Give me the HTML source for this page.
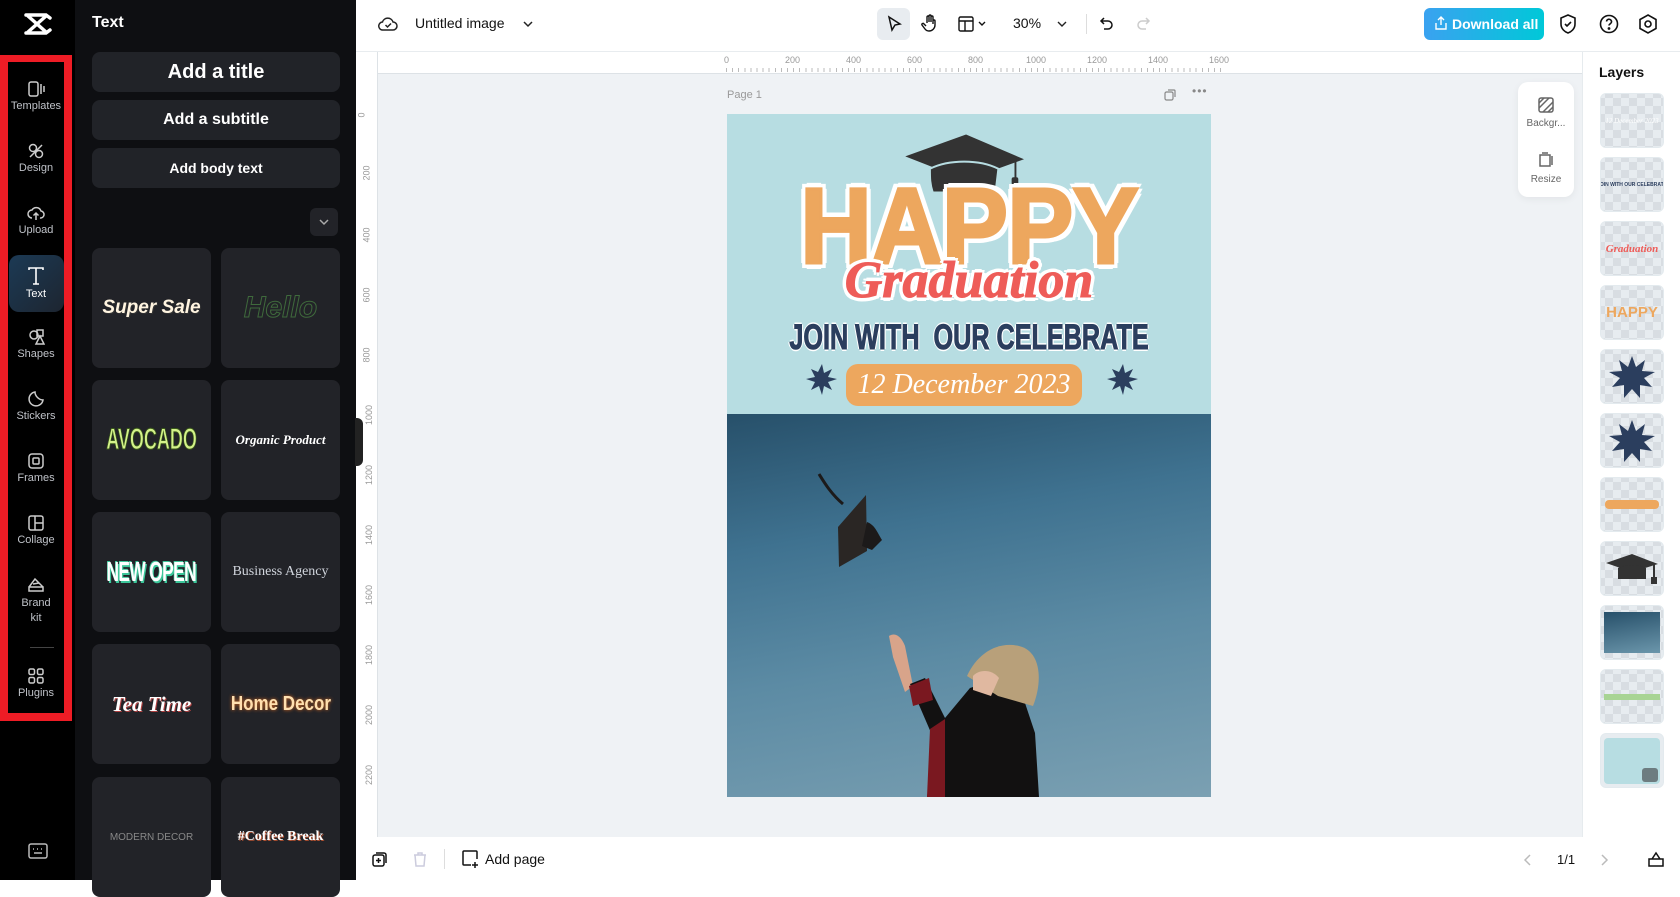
<!DOCTYPE html>
<html><head><meta charset="utf-8">
<style>
*{box-sizing:border-box;margin:0;padding:0}
body{width:1680px;height:880px;overflow:hidden;font-family:"Liberation Sans",sans-serif;background:#fff;position:relative}
.abs{position:absolute}
.rail{left:0;top:0;width:75px;height:880px;background:#000}
.ri{position:absolute;left:8px;width:56px;text-align:center;color:#bfc2c8;font-size:11px}
.ri svg{display:block;margin:0 auto 2px}
.panel{left:75px;top:0;width:281px;height:880px;background:#0e0f12}
.btn{position:absolute;left:17px;width:248px;background:#212328;border-radius:8px;color:#fff;font-weight:bold;text-align:center}
.card{position:absolute;width:119px;height:120px;background:#222328;border-radius:8px;display:flex;align-items:center;justify-content:center;overflow:hidden;white-space:nowrap}
.thumb{position:absolute;left:1600px;width:64px;height:55px;border-radius:6px;background-color:#e7ecf0;border:1px solid #e3eaee;overflow:hidden;white-space:nowrap;
background-image:linear-gradient(45deg,#d8dde2 25%,transparent 25%,transparent 75%,#d8dde2 75%),linear-gradient(45deg,#d8dde2 25%,transparent 25%,transparent 75%,#d8dde2 75%);
background-size:16px 16px;background-position:4px 4px,12px 12px;display:flex;align-items:center;justify-content:center}
</style></head><body>

<!-- left rail -->
<div class="abs rail">
  <svg class="abs" style="left:24px;top:12px" width="28" height="24" viewBox="0 0 28 24"><path d="M2 3h20l4 3M2 21h20l4-3M4 4l18 16M22 4L4 20" stroke="#fff" stroke-width="3.5" fill="none" stroke-linecap="round"/></svg>
  <div class="abs" style="left:0;top:55px;width:72px;height:666px;border:8px solid #ee1c25;border-top-width:7px"></div>
  <div class="abs" style="left:9px;top:255px;width:55px;height:57px;border-radius:10px;background:linear-gradient(135deg,#1c3a55,#1d2530)"></div>
  <div class="ri" style="top:80px"><svg width="18" height="18" viewBox="0 0 18 18" fill="none" stroke="#ccc" stroke-width="1.5"><rect x="2" y="2" width="9" height="14" rx="2"/><path d="M14 4v10M17 6v6"/></svg>Templates</div>
  <div class="ri" style="top:142px"><svg width="18" height="18" viewBox="0 0 18 18" fill="none" stroke="#ccc" stroke-width="1.5"><circle cx="6" cy="6" r="3.5"/><circle cx="12" cy="12" r="3.5"/><path d="M3 15L15 3"/></svg>Design</div>
  <div class="ri" style="top:204px"><svg width="18" height="18" viewBox="0 0 18 18" fill="none" stroke="#ccc" stroke-width="1.5"><path d="M5 14a4 4 0 010-8 5 5 0 019 1 3.5 3.5 0 01-1 7M9 9v7M6.5 11.5L9 9l2.5 2.5"/></svg>Upload</div>
  <div class="ri" style="top:266px;color:#fff"><svg width="20" height="20" viewBox="0 0 20 20" fill="none" stroke="#fff" stroke-width="1.6"><path d="M3 4V2h14v2M10 2v16M7 18h6"/></svg>Text</div>
  <div class="ri" style="top:328px"><svg width="18" height="18" viewBox="0 0 18 18" fill="none" stroke="#ccc" stroke-width="1.5"><circle cx="7" cy="7" r="4"/><path d="M9 16l4-8 4 8z" /><rect x="10" y="2" width="6" height="6"/></svg>Shapes</div>
  <div class="ri" style="top:390px"><svg width="18" height="18" viewBox="0 0 18 18" fill="none" stroke="#ccc" stroke-width="1.5"><path d="M16 10A7 7 0 118 2c0 4 4 8 8 8z"/></svg>Stickers</div>
  <div class="ri" style="top:452px"><svg width="18" height="18" viewBox="0 0 18 18" fill="none" stroke="#ccc" stroke-width="1.5"><rect x="2" y="2" width="14" height="14" rx="3"/><rect x="6" y="6" width="6" height="6" rx="1"/></svg>Frames</div>
  <div class="ri" style="top:514px"><svg width="18" height="18" viewBox="0 0 18 18" fill="none" stroke="#ccc" stroke-width="1.5"><rect x="2" y="2" width="14" height="14" rx="2"/><path d="M8 2v14M8 9h8"/></svg>Collage</div>
  <div class="ri" style="top:576px;line-height:15px"><svg width="18" height="18" viewBox="0 0 18 18" fill="none" stroke="#ccc" stroke-width="1.5"><path d="M2 15h14v-4H2zM2 11l6-8 8 8M6 8l6-1"/></svg>Brand<br>kit</div>
  <div class="abs" style="left:30px;top:647px;width:24px;height:1px;background:#444"></div>
  <div class="ri" style="top:667px"><svg width="18" height="18" viewBox="0 0 18 18" fill="none" stroke="#ccc" stroke-width="1.5"><rect x="2" y="2" width="5.5" height="5.5" rx="1.5"/><rect x="10.5" y="2" width="5.5" height="5.5" rx="1.5"/><rect x="2" y="10.5" width="5.5" height="5.5" rx="1.5"/><rect x="10.5" y="10.5" width="5.5" height="5.5" rx="1.5"/></svg>Plugins</div>
  <svg class="abs" style="left:28px;top:843px" width="20" height="16" viewBox="0 0 20 16" fill="none" stroke="#bbb" stroke-width="1.5"><rect x="1" y="1" width="18" height="14" rx="2"/><path d="M5 6h1M9 6h1M13 6h1M6 10h8"/></svg>
</div>

<!-- text panel -->
<div class="abs panel">
  <div class="abs" style="left:17px;top:14px;color:#fff;font-weight:bold;font-size:16px">Text</div>
  <div class="btn" style="top:52px;height:40px;line-height:40px;font-size:20px">Add a title</div>
  <div class="btn" style="top:100px;height:40px;line-height:40px;font-size:16px">Add a subtitle</div>
  <div class="btn" style="top:148px;height:40px;line-height:40px;font-size:14px;font-weight:bold">Add body text</div>
  <div class="abs" style="left:235px;top:208px;width:28px;height:28px;background:#222328;border-radius:6px"><svg width="28" height="28" viewBox="0 0 28 28"><path d="M10 12l4 4 4-4" stroke="#aaa" stroke-width="1.5" fill="none"/></svg></div>
  <div class="card" style="left:17px;top:248px"><span style="color:#fff4e0;font:italic bold 19px 'Liberation Sans';text-shadow:1px 1px 0 #333">Super Sale</span></div>
  <div class="card" style="left:146px;top:248px"><span style="color:transparent;-webkit-text-stroke:1px #3f6a3c;font:italic bold 30px 'Liberation Sans'">Hello</span></div>
  <div class="card" style="left:17px;top:380px"><span style="color:#d4f28a;font:bold 30px 'Liberation Sans';transform:scaleX(.6);display:inline-block;-webkit-text-stroke:1px #3a5a1a">AVOCADO</span></div>
  <div class="card" style="left:146px;top:380px"><span style="color:#fff;font:italic bold 13px 'Liberation Serif'">Organic Product</span></div>
  <div class="card" style="left:17px;top:512px"><span style="color:#fff;font:bold 28px 'Liberation Sans';transform:scaleX(.62);display:inline-block;text-shadow:2px 2px 0 #3cc69a,-1px -1px 0 #3cc69a;letter-spacing:-1px">NEW OPEN</span></div>
  <div class="card" style="left:146px;top:512px"><span style="color:#d0d4dc;font:14px 'Liberation Serif'">Business Agency</span></div>
  <div class="card" style="left:17px;top:644px"><span style="color:#fff;font:italic bold 21px 'Liberation Serif';text-shadow:1px 1px 0 #b04040">Tea Time</span></div>
  <div class="card" style="left:146px;top:644px"><span style="color:#ffe0b0;font:bold 20px 'Liberation Sans';transform:scaleX(.85);display:inline-block;text-shadow:0 0 4px #d96a20">Home Decor</span></div>
  <div class="card" style="left:17px;top:777px"><span style="color:#888;font:10px 'Liberation Sans'">MODERN DECOR</span></div>
  <div class="card" style="left:146px;top:777px"><span style="color:#fff;font:bold 14px 'Liberation Serif';text-shadow:1px 1px 0 #b05030">#Coffee Break</span></div>
</div>

<!-- top bar -->
<div class="abs" style="left:356px;top:0;width:1324px;height:52px;background:#fff;border-bottom:1px solid #e8ecef"></div>
<svg class="abs" style="left:378px;top:14px" width="20" height="20" viewBox="0 0 20 20" fill="none" stroke="#222" stroke-width="1.5"><path d="M5 16a4 4 0 01-.5-8A5.5 5.5 0 0115 8a4 4 0 010 8zM7.5 11l2 2 3.5-3.5"/></svg>
<div class="abs" style="left:415px;top:15px;font-size:14px;color:#111">Untitled image</div>
<svg class="abs" style="left:522px;top:18px" width="12" height="12" viewBox="0 0 12 12"><path d="M2 4l4 4 4-4" stroke="#222" stroke-width="1.5" fill="none"/></svg>
<div class="abs" style="left:877px;top:8px;width:33px;height:32px;background:#e8ecf0;border-radius:6px"></div>
<svg class="abs" style="left:884px;top:14px" width="20" height="20" viewBox="0 0 20 20" fill="none" stroke="#111" stroke-width="1.5"><path d="M5 3l11 7-5 1-3 5z"/></svg>
<svg class="abs" style="left:920px;top:13px" width="20" height="20" viewBox="0 0 20 20" fill="none" stroke="#111" stroke-width="1.4"><path d="M7 10V4a1 1 0 012 0v5V3a1 1 0 012 0v6V4a1 1 0 012 0v7 -3a1 1 0 012 0v4a6 6 0 01-6 6 5 5 0 01-4-2l-3-4a1 1 0 012-1l2 2"/></svg>
<svg class="abs" style="left:957px;top:14px" width="32" height="20" viewBox="0 0 32 20" fill="none" stroke="#111" stroke-width="1.4"><rect x="2" y="3" width="14" height="14" rx="1.5"/><path d="M2 7h14M8 7v10M22 8l3 3 3-3"/></svg>
<div class="abs" style="left:1013px;top:15px;font-size:14px;color:#111">30%</div>
<svg class="abs" style="left:1056px;top:18px" width="12" height="12" viewBox="0 0 12 12"><path d="M2 4l4 4 4-4" stroke="#222" stroke-width="1.4" fill="none"/></svg>
<div class="abs" style="left:1086px;top:14px;width:1px;height:20px;background:#ddd"></div>
<svg class="abs" style="left:1097px;top:14px" width="20" height="20" viewBox="0 0 20 20" fill="none" stroke="#111" stroke-width="1.5"><path d="M7 4L4 7l3 3M4 7h7a4 4 0 010 8H7"/></svg>
<svg class="abs" style="left:1133px;top:14px" width="20" height="20" viewBox="0 0 20 20" fill="none" stroke="#ccc" stroke-width="1.5"><path d="M13 4l3 3-3 3M16 7H9a4 4 0 000 8h4"/></svg>
<div class="abs" style="left:1424px;top:8px;width:120px;height:32px;border-radius:6px;background:linear-gradient(90deg,#3aa2f0,#00c8d8);color:#fff;font-weight:bold;font-size:14px;line-height:32px;padding-left:28px">Download all</div>
<svg class="abs" style="left:1433px;top:15px" width="16" height="16" viewBox="0 0 16 16" fill="none" stroke="#fff" stroke-width="1.4"><path d="M8 10V2M5 5l3-3 3 3M3 8v6h10V8"/></svg>
<svg class="abs" style="left:1558px;top:13px" width="20" height="22" viewBox="0 0 20 22" fill="none" stroke="#111" stroke-width="1.6"><path d="M10 2l7 3v6c0 5-4 8-7 9-3-1-7-4-7-9V5zM7 11l2 2 4-4"/></svg>
<svg class="abs" style="left:1598px;top:13px" width="22" height="22" viewBox="0 0 22 22" fill="none" stroke="#111" stroke-width="1.6"><circle cx="11" cy="11" r="8.5"/><path d="M8.5 8.5a2.5 2.5 0 115 .5c0 1.5-2.5 2-2.5 3.5"/><circle cx="11" cy="15.5" r=".6" fill="#111"/></svg>
<svg class="abs" style="left:1637px;top:13px" width="22" height="22" viewBox="0 0 22 22" fill="none" stroke="#111" stroke-width="1.6"><path d="M11 2l8 4.5v9L11 20l-8-4.5v-9z"/><circle cx="11" cy="11" r="3"/></svg>

<!-- canvas area -->
<div class="abs" style="left:356px;top:52px;width:1226px;height:785px;background:#eff2f5"></div>
<div class="abs" style="left:356px;top:52px;width:1226px;height:22px;background:#fff;border-bottom:1px solid #dde2e6"></div>
<div class="abs" style="left:356px;top:52px;width:22px;height:785px;background:#fff;border-right:1px solid #dde2e6"></div>
<div class="abs" style="left:724px;top:55px;font-size:9px;color:#999;white-space:nowrap">
<span class="abs" style="left:0">0</span><span class="abs" style="left:61px">200</span><span class="abs" style="left:122px">400</span><span class="abs" style="left:183px">600</span><span class="abs" style="left:244px">800</span><span class="abs" style="left:302px">1000</span><span class="abs" style="left:363px">1200</span><span class="abs" style="left:424px">1400</span><span class="abs" style="left:485px">1600</span></div>
<div class="abs" style="left:726px;top:68px;width:500px;height:4px;background:repeating-linear-gradient(90deg,#bbb 0 1px,transparent 1px 6.1px)"></div>
<div class="abs" style="left:359px;top:110px;width:12px;font-size:9px;color:#999">
<span class="abs" style="top:0;transform:rotate(-90deg)">0</span><span class="abs" style="top:58px;transform:rotate(-90deg)">200</span><span class="abs" style="top:120px;transform:rotate(-90deg)">400</span><span class="abs" style="top:180px;transform:rotate(-90deg)">600</span><span class="abs" style="top:240px;transform:rotate(-90deg)">800</span><span class="abs" style="top:300px;transform:rotate(-90deg)">1000</span><span class="abs" style="top:360px;transform:rotate(-90deg)">1200</span><span class="abs" style="top:420px;transform:rotate(-90deg)">1400</span><span class="abs" style="top:480px;transform:rotate(-90deg)">1600</span><span class="abs" style="top:540px;transform:rotate(-90deg)">1800</span><span class="abs" style="top:600px;transform:rotate(-90deg)">2000</span><span class="abs" style="top:660px;transform:rotate(-90deg)">2200</span></div>
<div class="abs" style="left:727px;top:89px;font-size:11px;color:#999">Page 1</div>
<svg class="abs" style="left:1163px;top:88px" width="14" height="14" viewBox="0 0 14 14" fill="none" stroke="#888" stroke-width="1.2"><rect x="2" y="4" width="8" height="8" rx="1.5"/><path d="M5 2h6a1 1 0 011 1v6"/></svg>
<div class="abs" style="left:1192px;top:84px;font-size:12px;color:#888;letter-spacing:1px">•••</div>
<div class="abs" style="left:355px;top:418px;width:8px;height:48px;background:#222;border-radius:0 6px 6px 0"></div>

<!-- page -->
<div class="abs" style="left:727px;top:114px;width:484px;height:300px;background:#b7dde2;overflow:hidden;white-space:nowrap">
  <svg class="abs" style="left:0;top:0" width="484" height="300" viewBox="0 0 484 300">
    <g transform="translate(12,12) scale(.95)">
    <path d="M175 32l64-23 61 26-61 22z" fill="#333"/>
    <path d="M201 45c0 10 0 16 3 25h66l3-25c-20-10-52-10-72 0z" fill="#333" stroke="#b7dde2" stroke-width="2"/>
    <path d="M291 34v22" stroke="#333" stroke-width="2"/><rect x="287" y="54" width="7" height="8" rx="2" fill="#333"/>
    </g>
    <g fill="#2b3e5e"><polygon points="91,258 95,250 97,259 105,255 101,263 110,265 101,268 105,276 97,272 95,281 92,272 84,276 88,268 79,265 88,263 84,255"/>
    <polygon points="392,258 396,250 398,259 406,255 402,263 411,265 402,268 406,276 398,272 396,281 393,272 385,276 389,268 380,265 389,263 385,255"/></g>
  </svg>
  <div class="abs" style="left:0;top:58px;width:484px;text-align:center;font:900 108px/1 'Liberation Sans';color:#eda75e;letter-spacing:-1px;transform:scaleX(.92);-webkit-text-stroke:3px #eda75e;text-shadow:6px 0 #fff,-6px 0 #fff,0 6px #fff,0 -6px #fff,5px 5px #fff,-5px -5px #fff,5px -5px #fff,-5px 5px #fff">HAPPY</div>
  <div class="abs" style="left:0;top:141px;width:484px;text-align:center;font:italic bold 52px/1 'Liberation Serif';color:#ee5c58;-webkit-text-stroke:1px #ee5c58;text-shadow:4px 0 #fff,-4px 0 #fff,0 4px #fff,0 -4px #fff,3px 3px #fff,-3px -3px #fff,3px -3px #fff,-3px 3px #fff">Graduation</div>
  <div class="abs" style="left:-60px;top:206px;width:604px;text-align:center;font:bold 35px/1 'Liberation Sans';color:#2b3e5e;transform:scaleX(.72);-webkit-text-stroke:1px #2b3e5e;text-shadow:2px 0 #fff,-2px 0 #fff,0 2px #fff,0 -2px #fff">JOIN WITH&nbsp; OUR CELEBRATE</div>
  <div class="abs" style="left:119px;top:250px;width:236px;height:42px;border-radius:12px;background:#eda75e;color:#fff;text-align:center;font:italic 28px/42px 'Liberation Serif'">12 December 2023</div>
</div>
<div class="abs" style="left:727px;top:414px;width:484px;height:383px;overflow:hidden;background:linear-gradient(170deg,#27506a 0%,#3f7290 30%,#5c8ba4 60%,#7ba0b2 100%)">
  <svg class="abs" style="left:0;top:0" width="484" height="383" viewBox="0 0 484 383">
    <path d="M111 113l28-32 1 56-28 16z" fill="#2a2624"/>
    <path d="M140 108c8 3 10 10 15 18l-10 10-10-4z" fill="#1c1a1a"/>
    <path d="M92 60c5 8 12 20 24 30" stroke="#1c1a1a" stroke-width="3" fill="none"/>
    <path d="M162 222c6-4 12 0 16 10l8 40-8 6-12-35z" fill="#d8a48a"/>
    <path d="M183 270l15-6 20 40 25-30 45-15 20 60 4 64H200l8-55z" fill="#121111"/>
    <path d="M182 272l20-8 4 22-20 6z" fill="#7a1820"/>
    <path d="M203 315l15-10v78h-18z" fill="#7a1820"/>
    <path d="M240 262c10-22 30-35 52-30 22 5 24 35 14 60l-35-10z" fill="#b8a07a"/>
    <path d="M246 262c5-6 18-8 26 2l-8 18-18-6z" fill="#e0b8a0"/>
  </svg>
</div>

<!-- floating tools -->
<div class="abs" style="left:1518px;top:82px;width:56px;height:115px;background:#fff;border-radius:10px;box-shadow:0 2px 8px rgba(0,0,0,.06)"></div>
<svg class="abs" style="left:1537px;top:96px" width="18" height="18" viewBox="0 0 18 18" fill="none" stroke="#666" stroke-width="1.5"><rect x="2" y="2" width="14" height="14" rx="2"/><path d="M2 12L12 2M6 16L16 6M2 7l5-5M11 16l5-5"/></svg>
<div class="abs" style="left:1518px;top:118px;width:56px;text-align:center;font-size:10px;color:#666">Backgr...</div>
<svg class="abs" style="left:1537px;top:151px" width="18" height="18" viewBox="0 0 18 18" fill="none" stroke="#666" stroke-width="1.5"><path d="M3 4h10v11H3zM5 2h6M15 5v9"/></svg>
<div class="abs" style="left:1518px;top:174px;width:56px;text-align:center;font-size:10px;color:#666">Resize</div>

<!-- layers panel -->
<div class="abs" style="left:1582px;top:52px;width:98px;height:785px;background:#fff;border-left:1px solid #e6ebee"></div>
<div class="abs" style="left:1599px;top:64px;font-weight:bold;font-size:14px;color:#111">Layers</div>
<div class="thumb" style="top:93px"><span style="color:#fff;font:italic 7px 'Liberation Serif'">12 December 2023</span></div>
<div class="thumb" style="top:157px"><span style="color:#2b3e5e;font:bold 5px 'Liberation Sans'">JOIN WITH OUR CELEBRATE</span></div>
<div class="thumb" style="top:221px"><span style="color:#ee5c58;font:italic bold 11px 'Liberation Serif'">Graduation</span></div>
<div class="thumb" style="top:285px"><span style="color:#eda75e;font:900 15px 'Liberation Sans'">HAPPY</span></div>
<div class="thumb" style="top:349px"><svg width="50" height="46" viewBox="0 0 50 46"><polygon fill="#2b3e5e" points="25,2 29,13 38,6 35,17 48,18 37,24 45,33 33,31 33,44 25,35 17,44 17,31 5,33 13,24 2,18 15,17 12,6 21,13"/></svg></div>
<div class="thumb" style="top:413px"><svg width="50" height="46" viewBox="0 0 50 46"><polygon fill="#2b3e5e" points="25,2 29,13 38,6 35,17 48,18 37,24 45,33 33,31 33,44 25,35 17,44 17,31 5,33 13,24 2,18 15,17 12,6 21,13"/></svg></div>
<div class="thumb" style="top:477px"><div style="width:54px;height:9px;border-radius:4px;background:#eda75e"></div></div>
<div class="thumb" style="top:541px"><svg width="56" height="36" viewBox="0 0 56 36"><path d="M2 12l26-9 26 10-26 8z" fill="#333"/><path d="M14 17v11h28V17c-9-4-19-4-28 0z" fill="#333"/><path d="M50 14v14" stroke="#333" stroke-width="2"/><rect x="47" y="26" width="6" height="7" fill="#333"/></svg></div>
<div class="thumb" style="top:605px"><div style="width:56px;height:41px;background:linear-gradient(170deg,#27506a,#6b96ab)"></div></div>
<div class="thumb" style="top:669px"><div style="width:56px;height:6px;background:#a8d494"></div></div>
<div class="thumb" style="top:733px;background:#e7ecf0"><div style="width:56px;height:46px;border-radius:4px;background:#b7dde2;position:relative"><div style="position:absolute;right:2px;bottom:2px;width:16px;height:14px;border-radius:3px;background:#6d7c80"></div></div></div>

<!-- bottom bar -->
<div class="abs" style="left:356px;top:837px;width:1324px;height:43px;background:#fff"></div>
<svg class="abs" style="left:371px;top:850px" width="18" height="18" viewBox="0 0 18 18" fill="none" stroke="#111" stroke-width="1.5"><rect x="2" y="5" width="11" height="11" rx="2"/><path d="M5 3h8a2 2 0 012 2v8M7.5 8v5M5 10.5h5"/></svg>
<svg class="abs" style="left:411px;top:850px" width="18" height="18" viewBox="0 0 18 18" fill="none" stroke="#ccd" stroke-width="1.5"><path d="M3 5h12M7 5V3h4v2M4 5l1 11h8l1-11"/></svg>
<div class="abs" style="left:444px;top:849px;width:1px;height:20px;background:#ddd"></div>
<svg class="abs" style="left:461px;top:849px" width="18" height="20" viewBox="0 0 18 20" fill="none" stroke="#111" stroke-width="1.5"><path d="M10 16H3a1 1 0 01-1-1V3a1 1 0 011-1h12a1 1 0 011 1v7M14 13v6M11 16h6"/></svg>
<div class="abs" style="left:485px;top:851px;font-size:14px;color:#111">Add page</div>
<svg class="abs" style="left:1522px;top:853px" width="12" height="14" viewBox="0 0 12 14"><path d="M8 2L3 7l5 5" stroke="#bbb" stroke-width="1.5" fill="none"/></svg>
<div class="abs" style="left:1557px;top:852px;font-size:13px;color:#111">1/1</div>
<svg class="abs" style="left:1598px;top:853px" width="12" height="14" viewBox="0 0 12 14"><path d="M4 2l5 5-5 5" stroke="#bbb" stroke-width="1.5" fill="none"/></svg>
<svg class="abs" style="left:1647px;top:850px" width="18" height="18" viewBox="0 0 18 18" fill="none" stroke="#111" stroke-width="1.5"><path d="M2 9h14v7H2zM5 9l4-6 4 6"/></svg>
</body></html>
